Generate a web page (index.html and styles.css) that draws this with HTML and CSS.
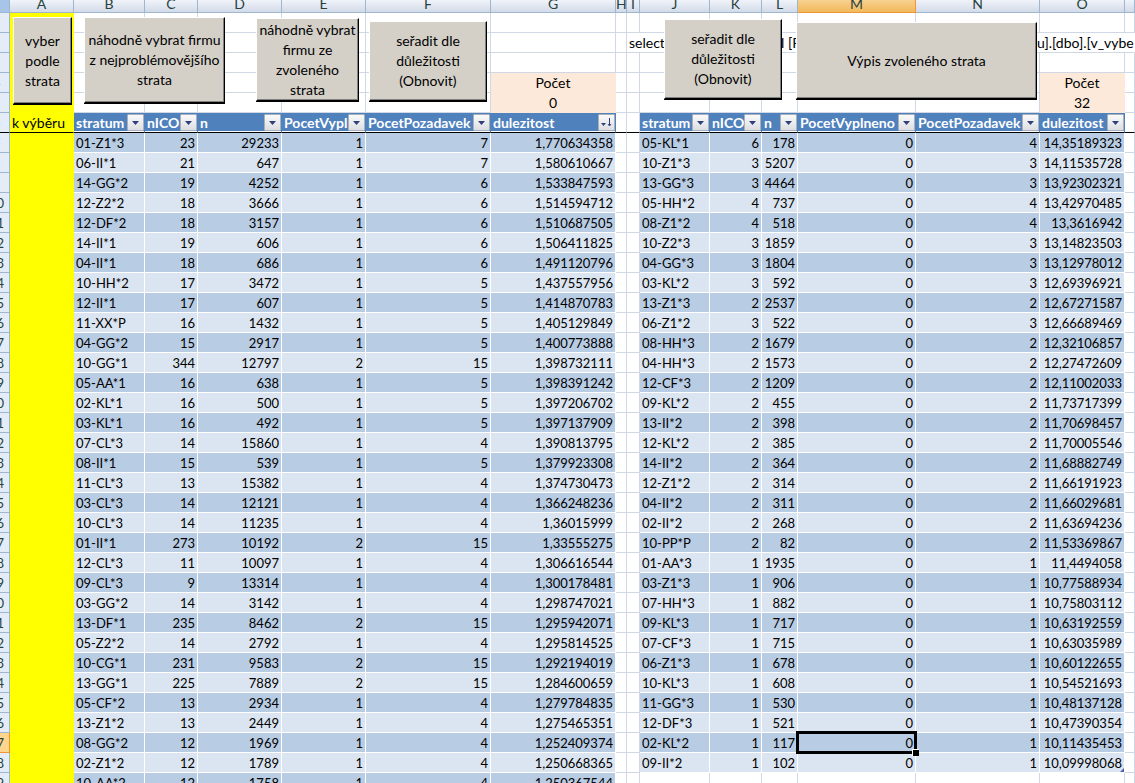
FILE: index.html
```html
<!DOCTYPE html>
<html lang="cs">
<head>
<meta charset="utf-8">
<title>Výběr strata</title>
<link rel="stylesheet" href="styles.css">
</head>
<body>
<main class="sheet">
  <table class="grid">
    <colgroup>
      <col class="w-num"><col class="w-a"><col class="w-b"><col class="w-c"><col class="w-d"><col class="w-d"><col class="w-f"><col class="w-f"><col class="w-h"><col class="w-i"><col class="w-j"><col class="w-k"><col class="w-l"><col class="w-m"><col class="w-n"><col class="w-o"><col>
    </colgroup>
    <thead id="head"></thead>
    <tbody id="rows"></tbody>
  </table>
  <button type="button" class="macro pick">vyber podle strata</button>
  <button type="button" class="macro worst">náhodně vybrat firmu z nejproblémovějšího strata</button>
  <button type="button" class="macro random">náhodně vybrat firmu ze zvoleného strata</button>
  <button type="button" class="macro sort-left">seřadit dle důležitosti (Obnovit)</button>
  <button type="button" class="macro sort-right">seřadit dle důležitosti (Obnovit)</button>
  <button type="button" class="macro list">Výpis zvoleného strata</button>
</main>
<script src="sheet.js"></script>
</body>
</html>
```
FILE: styles.css
```css
* { box-sizing: border-box; }
body {
  margin: 0;
  background: #fff;
  color: #000;
  font-family: Lato, "Liberation Sans", sans-serif;
  font-size: 14px;
  line-height: 17px;
}
.sheet { position: relative; height: 100vh; overflow: hidden; }

.grid {
  table-layout: fixed;
  width: calc(100% + 16px);
  margin-left: -16px;
  border-collapse: separate;
  border-spacing: 0;
}
.w-num { width: 26px; }
.w-a { width: 64px; }
.w-b { width: 71px; }
.w-c { width: 53px; }
.w-d { width: 84px; }
.w-f { width: 125px; }
.w-h { width: 11px; }
.w-i { width: 13px; }
.w-j { width: 70px; }
.w-k { width: 52px; }
.w-l { width: 36px; }
.w-m { width: 118px; }
.w-n { width: 124px; }
.w-o { width: 85px; }

.grid td, .grid th {
  height: 20px;
  padding: 0 2px;
  border: 0 solid #d0d7e5;
  border-width: 0 1px 1px 0;
  overflow: hidden;
  white-space: nowrap;
  text-align: left;
  font-weight: 400;
}
.grid .letter {
  height: 13px;
  padding: 0;
  border-color: #9eb6ce;
  overflow: visible;
  background: linear-gradient(#f0f3f9, #d3dbe9);
  color: #27413e;
  text-align: center;
}
.letter span { display: block; height: 12px; line-height: 8px; }
.grid .letter.active { background: linear-gradient(#f8d191, #f1b95b); border-color: #f29536; }
.grid .corner { background: #a9c4e9; }

.grid .num {
  padding: 2px 0 0;
  border-color: #9eb6ce;
  background: #e4ecf7;
  color: #27413e;
  font-size: 13px;
  text-align: center;
}
.grid .num.active { background: #ffd58d; border-color: #f29536; }
.grid .yellow { background: #ff0; border-color: #ff0; }
.grid .count { background: #fde9d9; border-color: #fde9d9; text-align: center; }
.grid .query { border-right-color: transparent; }
.grid .query-mid { padding-left: 71px; }
.grid .query-end { padding-left: 121px; }

.grid .titles > * { border-bottom-color: #000; }
.grid .title {
  padding: 0 0 0 2px;
  border-right-color: #4f81bd;
  background: #4f81bd;
  box-shadow: inset 0 -1px #fff;
  color: #fff;
  font-weight: 700;
}
.title div { display: flex; align-items: center; height: 19px; }
.title span { flex: 1; min-width: 0; overflow: hidden; }
.filter {
  flex: none;
  display: flex;
  align-items: center;
  justify-content: center;
  width: 17px;
  height: 17px;
  padding: 0;
  border: 1px solid #a9b0bc;
  border-radius: 1px;
  background: linear-gradient(#fafafa, #dcdee2);
}
.filter svg { display: block; width: 13px; height: 13px; }

.grid .band { padding-top: 2px; border-color: #fff; background: #dbe5f1; font-size: 13px; }
.grid .band.dark { background: #b8cce4; }
.grid .number { text-align: right; }
.grid .wide { padding-right: 2px; }
.grid .selected { position: relative; overflow: visible; }
.selected::before {
  content: "";
  position: absolute;
  inset: -2px;
  border: 3px solid #000;
}
.selected::after {
  content: "";
  position: absolute;
  right: -4px;
  bottom: -4px;
  width: 6px;
  height: 6px;
  border: 1px solid #fff;
  border-width: 1px 0 0 1px;
  background: #000;
}
.grid .last { position: relative; }
.last::after {
  content: "";
  position: absolute;
  right: 0;
  bottom: 0;
  border: 2px solid #4a5fb0;
  border-top-color: transparent;
  border-left-color: transparent;
}

.macro {
  position: absolute;
  padding: 0;
  border: 1px solid;
  border-color: #fff #000 #000 #fff;
  background: #d4d0c8;
  box-shadow: inset -1px -1px #808080, 0 1px #000;
  color: #000;
  font: inherit;
  line-height: 20px;
}
.pick { left: 13px; top: 17px; width: 59px; height: 87px; padding: 0 8px; }
.worst { left: 84px; top: 17px; width: 141px; height: 86px; }
.random { left: 256px; top: 18px; width: 103px; height: 83px; }
.sort-left { left: 369px; top: 21px; width: 118px; height: 80px; padding: 0 16px; }
.sort-right { left: 664px; top: 19px; width: 118px; height: 80px; padding: 0 16px; }
.list { left: 796px; top: 22px; width: 241px; height: 77px; }
```
FILE: sheet.js
```js
const left = `01-Z1*3 23 29233 1 7 1,770634358
06-II*1 21 647 1 7 1,580610667
14-GG*2 19 4252 1 6 1,533847593
12-Z2*2 18 3666 1 6 1,514594712
12-DF*2 18 3157 1 6 1,510687505
14-II*1 19 606 1 6 1,506411825
04-II*1 18 686 1 6 1,491120796
10-HH*2 17 3472 1 5 1,437557956
12-II*1 17 607 1 5 1,414870783
11-XX*P 16 1432 1 5 1,405129849
04-GG*2 15 2917 1 5 1,400773888
10-GG*1 344 12797 2 15 1,398732111
05-AA*1 16 638 1 5 1,398391242
02-KL*1 16 500 1 5 1,397206702
03-KL*1 16 492 1 5 1,397137909
07-CL*3 14 15860 1 4 1,390813795
08-II*1 15 539 1 5 1,379923308
11-CL*3 13 15382 1 4 1,374730473
03-CL*3 14 12121 1 4 1,366248236
10-CL*3 14 11235 1 4 1,36015999
01-II*1 273 10192 2 15 1,33555275
12-CL*3 11 10097 1 4 1,306616544
09-CL*3 9 13314 1 4 1,300178481
03-GG*2 14 3142 1 4 1,298747021
13-DF*1 235 8462 2 15 1,295942071
05-Z2*2 14 2792 1 4 1,295814525
10-CG*1 231 9583 2 15 1,292194019
13-GG*1 225 7889 2 15 1,284600659
05-CF*2 13 2934 1 4 1,279784835
13-Z1*2 13 2449 1 4 1,275465351
08-GG*2 12 1969 1 4 1,252409374
02-Z1*2 12 1789 1 4 1,250668365
10-AA*2 12 1758 1 4 1,250367544`.split('\n').map(line => line.split(' '));

const right = `05-KL*1 6 178 0 4 14,35189323
10-Z1*3 3 5207 0 3 14,11535728
13-GG*3 3 4464 0 3 13,92302321
05-HH*2 4 737 0 4 13,42970485
08-Z1*2 4 518 0 4 13,3616942
10-Z2*3 3 1859 0 3 13,14823503
04-GG*3 3 1804 0 3 13,12978012
03-KL*2 3 592 0 3 12,69396921
13-Z1*3 2 2537 0 2 12,67271587
06-Z1*2 3 522 0 3 12,66689469
08-HH*3 2 1679 0 2 12,32106857
04-HH*3 2 1573 0 2 12,27472609
12-CF*3 2 1209 0 2 12,11002033
09-KL*2 2 455 0 2 11,73717399
13-II*2 2 398 0 2 11,70698457
12-KL*2 2 385 0 2 11,70005546
14-II*2 2 364 0 2 11,68882749
12-Z1*2 2 314 0 2 11,66191923
04-II*2 2 311 0 2 11,66029681
02-II*2 2 268 0 2 11,63694236
10-PP*P 2 82 0 2 11,53369867
01-AA*3 1 1935 0 1 11,4494058
03-Z1*3 1 906 0 1 10,77588934
07-HH*3 1 882 0 1 10,75803112
09-KL*3 1 717 0 1 10,63192559
07-CF*3 1 715 0 1 10,63035989
06-Z1*3 1 678 0 1 10,60122655
10-KL*3 1 608 0 1 10,54521693
11-GG*3 1 530 0 1 10,48137128
12-DF*3 1 521 0 1 10,47390354
02-KL*2 1 117 0 1 10,11435453
09-II*2 1 102 0 1 10,09998068`.split('\n').map(line => line.split(' '));

const blank = n => '<td></td>'.repeat(n);
const rowNumber = n => `<th scope="row" class="num${n === 37 ? ' active' : ''}">${n}</th>`;

const arrow = '<svg viewBox="0 0 13 13"><path d="M3 5h7L6.500 9z" fill="#2f3f7d"/></svg>';
const sorted = '<svg viewBox="0 0 13 13"><path d="M1 7h5L3.500 10z" fill="#2f3f7d"/><path d="M9.500 2v7M8 8l1.500 2L11 8" fill="none" stroke="#2f3f7d"/></svg>';
const title = (text, icon = arrow) =>
  `<th scope="col" class="title"><div><span>${text}</span><button type="button" class="filter" aria-label="Filtr ${text}">${icon}</button></div></th>`;

const letters = 'ABCDEFGHIJKLMNO'.split('').map(l =>
  `<th scope="col" class="letter${l === 'M' ? ' active' : ''}"><span>${l}</span></th>`).join('');

const yellow = '<td class="yellow"></td>';
const count = text => `<td class="count">${text}</td>`;

document.getElementById('head').innerHTML =
  `<tr><th class="letter corner"></th>${letters}<th class="letter"></th></tr>` +
  `<tr>${rowNumber(1)}${yellow}${blank(15)}</tr>` +
  `<tr>${rowNumber(2)}${yellow}${blank(7)}<td class="query" colspan="2">select</td><td class="query query-mid" colspan="3">l [P</td><td class="query query-end" colspan="3">u].[dbo].[v_vyber]</td></tr>` +
  `<tr>${rowNumber(3)}${yellow}${blank(15)}</tr>` +
  `<tr>${rowNumber(4)}${yellow}${blank(5)}${count('Počet')}${blank(7)}${count('Počet')}${blank(1)}</tr>` +
  `<tr>${rowNumber(5)}${yellow}${blank(5)}${count('0')}${blank(7)}${count('32')}${blank(1)}</tr>` +
  `<tr class="titles">${rowNumber(6)}<td class="yellow">k výběru</td>` +
  ['stratum', 'nICO', 'n', 'PocetVyplneno', 'PocetPozadavek'].map(t => title(t)).join('') +
  title('dulezitost', sorted) + blank(2) +
  ['stratum', 'nICO', 'n', 'PocetVyplneno', 'PocetPozadavek', 'dulezitost'].map(t => title(t)).join('') +
  blank(1) + '</tr>';

function cells(values, index, isRight) {
  return values.map((value, col) => {
    const names = ['band'];
    if (index % 2 === 0) names.push('dark');
    if (col > 0) names.push('number');
    if (col === 5) names.push('wide');
    if (isRight && index === 30 && col === 3) names.push('selected');
    if (isRight && index === right.length - 1 && col === 5) names.push('last');
    return `<td class="${names.join(' ')}">${value}</td>`;
  }).join('');
}

document.getElementById('rows').innerHTML = left.map((values, i) =>
  `<tr>${rowNumber(i + 7)}${yellow}${cells(values, i, false)}${blank(2)}` +
  (right[i] ? cells(right[i], i, true) : blank(6)) + blank(1) + '</tr>').join('');
```
